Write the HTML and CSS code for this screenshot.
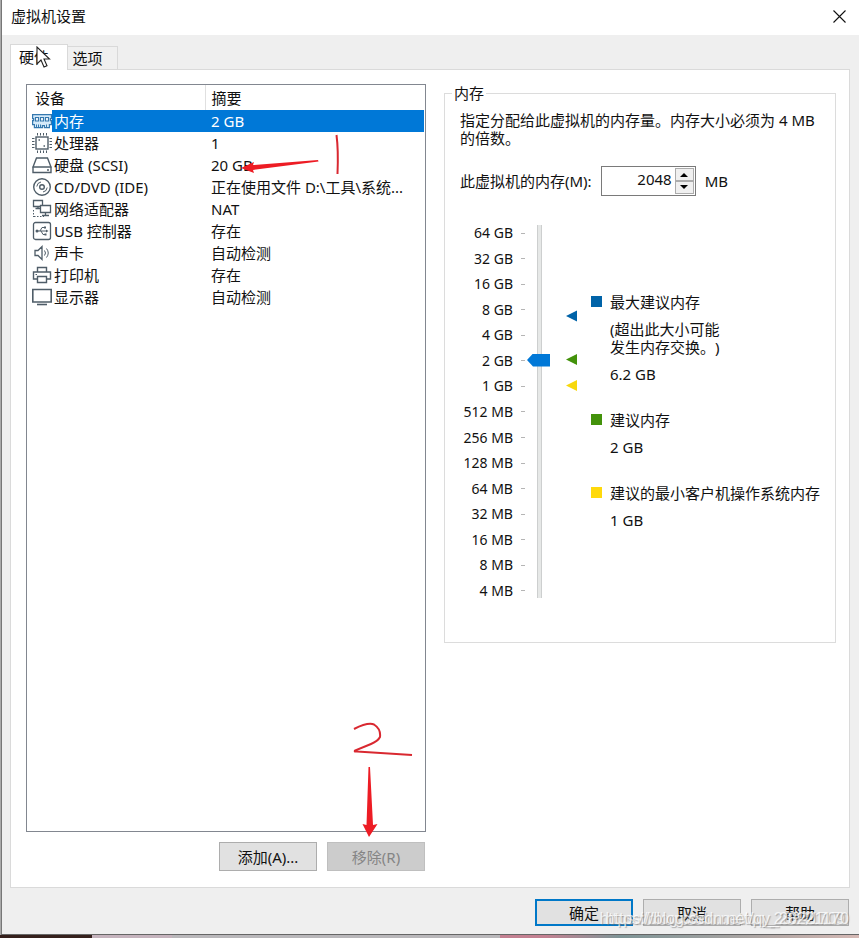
FILE: index.html
```html
<!DOCTYPE html>
<html lang="zh-CN">
<head>
<meta charset="utf-8">
<title>虚拟机设置</title>
<link rel="stylesheet" href="styles.css">
</head>
<body>
<main class="dialog">
  <header class="titlebar">
    <h1>虚拟机设置</h1>
    <button class="close" aria-label="关闭"><svg width="13" height="13" viewBox="0 0 13 13"><path d="M.5.5l12 12M12.5.5l-12 12" stroke="#111" stroke-width="1.1"/></svg></button>
  </header>
  <div class="tabs" role="tablist">
    <button class="tab active" role="tab" aria-selected="true">硬件</button>
    <button class="tab" role="tab" aria-selected="false">选项</button>
    <svg class="cursor" width="15" height="23" viewBox="0 0 15 23"><path d="M1 1v17l4-4 3 7 3-1.300-3-6.700h5.500z" fill="#fff" stroke="#222" stroke-width="1.100"/></svg>
  </div>
  <section class="panel">
    <div class="devices">
      <div class="list">
        <table>
          <thead><tr><th>设备</th><th>摘要</th></tr></thead>
          <tbody>
            <tr class="selected"><td><span class="device"><svg viewBox="0 0 20 20"><path d="M.6 3.600h18.800v4h-1v2h1v4h-2v3h-5v-2h-2v2h-8v-3H.6v-4h1v-2h-1z" fill="#d5eafa" stroke="#3578ae" stroke-width="1.200"/><path d="M3.500 6.500h3v3.500h-3zM8.500 6.500h3v3.500h-3zM13.500 6.500h3v3.500h-3z" fill="#fff" stroke="#3578ae" stroke-width="1.200"/><path d="M4.500 13.500v2.500M6.500 13.500v2.500M8.500 13.500v2.500M14.500 13.500v2.500" stroke="#3578ae"/></svg><b>内存</b></span></td><td>2 GB</td></tr>
            <tr><td><span class="device"><svg viewBox="0 0 20 20"><rect x="4" y="4" width="12" height="12" fill="#fff" stroke-width="1.400"/><path d="M5.500 0v2.500M8.500 0v2.500M11.500 0v2.500M14.500 0v2.500M5.500 17.500v2.500M8.500 17.500v2.500M11.500 17.500v2.500M14.500 17.500v2.500M0 5.500h2.500M0 8.500h2.500M0 11.500h2.500M0 14.500h2.500M17.500 5.500h2.500M17.500 8.500h2.500M17.500 11.500h2.500M17.500 14.500h2.500"/><path d="M6.500 7H8M11.500 13H13" stroke-width="1.500"/></svg><b>处理器</b></span></td><td>1</td></tr>
            <tr><td><span class="device"><svg viewBox="0 0 20 20"><path d="M4.500 3h11L19 12H1zM1 12h18v5.500H1z" stroke-width="1.400"/><path d="M15 15h2" stroke-width="1.500"/></svg><b>硬盘 (SCSI)</b></span></td><td>20 GB</td></tr>
            <tr><td><span class="device"><svg viewBox="0 0 20 20"><circle cx="10" cy="10" r="8.300" stroke-width="1.400"/><circle cx="10" cy="10" r="2.300" stroke-width="1.400"/><path d="M4.800 9.500A5 5 0 0 1 9 5M15.200 10.500A5 5 0 0 1 11 15"/></svg><b>CD/DVD (IDE)</b></span></td><td>正在使用文件 D:\工具\系统...</td></tr>
            <tr><td><span class="device"><svg viewBox="0 0 20 20"><path d="M1.500 1.500h9v6h-9zM6 7.500v2M3.500 9.500H8" stroke-width="1.300"/><path d="M8.500 6.500h10v7h-10z" fill="#fff" stroke-width="1.300"/><path d="M13.500 13.500v2.500M10 16.500h7" stroke-width="1.300"/><path d="M1.500 11v7M2 17.500h10" stroke-dasharray="1.500 1.500"/></svg><b>网络适配器</b></span></td><td>NAT</td></tr>
            <tr><td><span class="device"><svg viewBox="0 0 20 20"><rect x="1.500" y="1.500" width="17" height="17" rx="2" stroke-width="1.300"/><path d="M5 10h10M8 10l2-3.500h2.500M9 10l2 3.500h2"/><path d="M14 8.500L16.500 10 14 11.500z" fill="#4f5d68" stroke="none"/><circle cx="5" cy="10" r="1.500" fill="#4f5d68" stroke="none"/><path d="M12 5.500h2v2h-2zM12.500 12.500h2v2h-2z" fill="#4f5d68" stroke="none"/></svg><b>USB 控制器</b></span></td><td>存在</td></tr>
            <tr><td><span class="device"><svg viewBox="0 0 20 20"><path d="M3 7.500h3l4-4v13l-4-4H3z" stroke-width="1.300"/><path d="M12.500 7.500q2 2.500 0 5M14.500 5.500q3.500 4.500 0 9"/></svg><b>声卡</b></span></td><td>自动检测</td></tr>
            <tr><td><span class="device"><svg viewBox="0 0 20 20"><path d="M5.500 7V2.500h9V7M5.500 14h-4V7h17v7h-4" stroke-width="1.400"/><path d="M5.500 11.500h9v6h-9z" fill="#fff" stroke-width="1.400"/><path d="M3.500 9.500H5"/></svg><b>打印机</b></span></td><td>存在</td></tr>
            <tr><td><span class="device"><svg viewBox="0 0 20 20"><path d="M.8 2.500h18.400v12.500H.8z" stroke-width="1.600"/><path d="M5 17.500h10" stroke-width="1.600"/></svg><b>显示器</b></span></td><td>自动检测</td></tr>
          </tbody>
        </table>
      </div>
      <div class="actions">
        <button>添加(A)...</button>
        <button disabled>移除(R)</button>
      </div>
      <svg class="mark mark-one" width="106" height="50" viewBox="0 0 106 50">
        <path d="M0 34l13-6-1 3 65-5 .5 1.500L12 36l1 3z" fill="#ed1c24"/>
        <path d="M95.500 1q2 15 1 39" fill="none" stroke="#d92830" stroke-width="2"/>
      </svg>
      <svg class="mark mark-two" width="62" height="116" viewBox="0 0 62 116">
        <path d="M1 7Q15 0 21 2.500Q28 7 27 15Q25 19 18 22L2 28.500Q1 30 4 29.500L59 33" fill="none" stroke="#d92830" stroke-width="2"/>
        <path d="M15.500 45h1.500l3 58 4.500-1L16 115l-6.500-13 4 1z" fill="#ed1c24"/>
      </svg>
    </div>
    <fieldset class="memory">
      <legend>内存</legend>
      <p>指定分配给此虚拟机的内存量。内存大小必须为 4 MB 的倍数。</p>
      <div class="amount">
        <label for="memory">此虚拟机的内存(M):</label>
        <span class="spinner">
          <input id="memory" type="text" inputmode="numeric" value="2048">
          <span class="steps">
            <button aria-label="增加"><svg width="8" height="5" viewBox="0 0 8 5"><path d="M0 5l4-4 4 4z"/></svg></button>
            <button aria-label="减少"><svg width="8" height="5" viewBox="0 0 8 5"><path d="M0 0l4 4 4-4z"/></svg></button>
          </span>
        </span>
        <span>MB</span>
      </div>
      <div class="chart">
        <ul class="scale">
          <li>64 GB</li><li>32 GB</li><li>16 GB</li><li>8 GB</li><li>4 GB</li><li>2 GB</li><li>1 GB</li><li>512 MB</li><li>256 MB</li><li>128 MB</li><li>64 MB</li><li>32 MB</li><li>16 MB</li><li>8 MB</li><li>4 MB</li>
        </ul>
        <input class="slider" type="range" min="0" max="14" value="9" aria-label="虚拟机内存">
        <svg class="markers" width="12" height="373" viewBox="0 0 12 373">
          <path d="M0 91l11-5.500v11z" fill="#0063a8"/><path d="M0 134.500l11-5.500v11z" fill="#43920b"/><path d="M0 160.500l11-5.500v11z" fill="#f7d80d"/>
        </svg>
        <dl class="key">
          <div class="max"><dt>最大建议内存</dt><dd>(超出此大小可能<br>发生内存交换。)</dd><dd>6.2 GB</dd></div>
          <div class="recommended"><dt>建议内存</dt><dd>2 GB</dd></div>
          <div class="min"><dt>建议的最小客户机操作系统内存</dt><dd>1 GB</dd></div>
        </dl>
      </div>
    </fieldset>
  </section>
  <footer class="footer">
    <button class="default">确定</button>
    <button>取消</button>
    <button>帮助</button>
    <span class="watermark">https://blog.csdn.net/qq_28241709</span>
    <span class="watermark second">https://blog.csdn.net/qy_28221170</span>
  </footer>
</main>
</body>
</html>
```
FILE: styles.css
```css
* { box-sizing: border-box; }

body {
  margin: 0;
  min-height: 100vh;
  padding: 0 0 3px 1px;
  display: flex;
  background: linear-gradient(90deg, #35201c 0 92px, #c5b3bd 92px 172px, #b9b7ba 172px 500px, #c38091 500px 545px, #7d9496 620px, #b5a8a5 780px, #d5b9b5) bottom / 100% 3px no-repeat, #aaa;
  color: #111;
  font: 15px/18px "Noto Sans", "Noto Sans CJK SC", sans-serif;
  text-spacing-trim: space-all;
}

button, input { font: inherit; color: inherit; padding: 0; margin: 0; }

.dialog {
  flex: 1;
  min-width: 0;
  display: flex;
  flex-direction: column;
  background: #efefef;
  border-left: 1px solid #777;
  border-bottom: 1px solid #666;
}

.titlebar {
  display: flex;
  align-items: center;
  justify-content: space-between;
  height: 35px;
  padding: 0 13px 3px 9px;
  background: #fff;
}
.titlebar h1 { margin: 0; font-size: 15px; font-weight: 400; }
.close { border: 0; background: none; display: flex; }

.tabs {
  position: relative;
  z-index: 1;
  display: flex;
  align-items: flex-end;
  height: 35px;
  margin: 0 9px -1px 8px;
}
.tab {
  width: 50px;
  height: 24px;
  padding-right: 10px;
  border: 1px solid #d9d9d9;
  border-left: 0;
  background: #f0f0f0;
}
.tab.active {
  width: 58px;
  height: 26px;
  padding: 0 10px 2px 0;
  border-left: 1px solid #d9d9d9;
  border-bottom: 0;
  background: #fff;
}
.cursor { position: absolute; left: 26px; top: 11px; }

.panel {
  flex: 1;
  display: grid;
  grid-template-columns: 400fr 392fr;
  gap: 18px;
  margin: 0 9px 0 8px;
  padding: 14px 13px 16px 15px;
  border: 1px solid #dadada;
  background: #fff;
}

.devices { position: relative; display: flex; flex-direction: column; gap: 10px; }
.list { flex: 1; padding-right: 1px; border: 1px solid #828790; }
table { width: 100%; border-collapse: collapse; table-layout: fixed; }
th { height: 25px; padding: 0 8px; text-align: left; font-weight: 400; }
th:first-child { width: 178px; border-right: 1px solid #e0e0e0; }
th:last-child { padding: 0 6px; }
td { height: 22px; padding: 0 6px; white-space: nowrap; }
td:first-child { padding: 0 0 0 5px; }
.device { display: flex; height: 22px; align-items: center; }
.device svg { width: 20px; height: 20px; flex: none; fill: none; stroke: #4f5d68; }
.device b { flex: 1; padding-left: 2px; font-weight: 400; line-height: 22px; }
.selected b, .selected td:last-child { background: #0078d7; color: #fff; }

.mark { position: absolute; pointer-events: none; }
.mark-one { left: 215px; top: 50px; }
.mark-two { right: 11px; bottom: 33px; }

.actions { display: flex; justify-content: flex-end; gap: 10px; padding-right: 1px; }
.actions button, .footer button {
  width: 98px;
  height: 29px;
  border: 1px solid #adadad;
  background: #e1e1e1;
}
.actions button:disabled { background: #ccc; border-color: #bfbfbf; color: #858585; }

.memory {
  align-self: start;
  min-width: 0;
  margin: 0;
  padding: 9px 15px 42px;
  border: 1px solid #dcdcdc;
}
legend { margin-left: -8px; padding: 0 2px; }
.memory p { margin: 0; }
.amount { display: flex; align-items: center; gap: 9px; margin-top: 19px; }
.spinner { display: flex; width: 95px; height: 30px; padding: 1px; border: 1px solid #7a7a7a; }
.spinner input { flex: 1; min-width: 0; padding: 0 3px 4px 0; border: 0; text-align: right; background: none; outline: 0; }
.steps { display: flex; flex-direction: column; width: 19px; }
.steps button { flex: 1; display: flex; align-items: center; justify-content: center; min-height: 0; border: 1px solid #acacac; background: #f0f0f0; }

.chart { display: flex; margin-top: 28px; }
.scale {
  display: flex;
  flex-direction: column;
  justify-content: space-between;
  width: 65px;
  height: 376px;
  margin: 0;
  padding: 0;
  list-style: none;
  font-size: 14px;
}
.scale li { display: flex; justify-content: flex-end; align-items: center; gap: 8px; }
.scale li::after { content: ""; width: 4px; height: 1px; background: #b5b5b5; }
.slider {
  appearance: none;
  writing-mode: vertical-lr;
  direction: rtl;
  width: 23px;
  height: 373px;
  margin: 1px 16px 0 2px;
  background: linear-gradient(90deg, #cdcfcf 1px, #e6e8e7 1px 4px, #cdcfcf 4px) 10px 0 / 5px 100% no-repeat;
}
.slider::-webkit-slider-thumb {
  appearance: none;
  width: 23px;
  height: 13px;
  background: #0078d7;
  clip-path: polygon(0 50%, 6px 0, 100% 0, 100% 100%, 6px 100%);
}
.markers { flex: none; margin-top: 1px; }
.key { margin: 69px 0 0 13px; white-space: nowrap; }
.key > div { margin-bottom: 28px; padding-left: 19px; }
.key dt::before { content: ""; float: left; width: 11px; height: 11px; margin: 3px 0 0 -19px; background: #0063a8; }
.key .recommended dt::before { background: #43920b; }
.key .min dt::before { background: #ffd90b; }
.key dd { margin: 9px 0 0; }

.footer { position: relative; display: flex; justify-content: flex-end; gap: 10px; padding: 11px 10px 8px; }
.footer button { height: 27px; }
.footer .default { border: 2px solid #0078c8; }
.watermark {
  position: absolute;
  right: 14px;
  bottom: 6px;
  color: rgb(255 255 255 / 75%);
  font: 16px/18px "Liberation Sans", sans-serif;
  text-shadow: 1px 1px 1px rgb(120 120 120 / 55%);
  pointer-events: none;
}
.watermark.second { right: 10px; }
```
